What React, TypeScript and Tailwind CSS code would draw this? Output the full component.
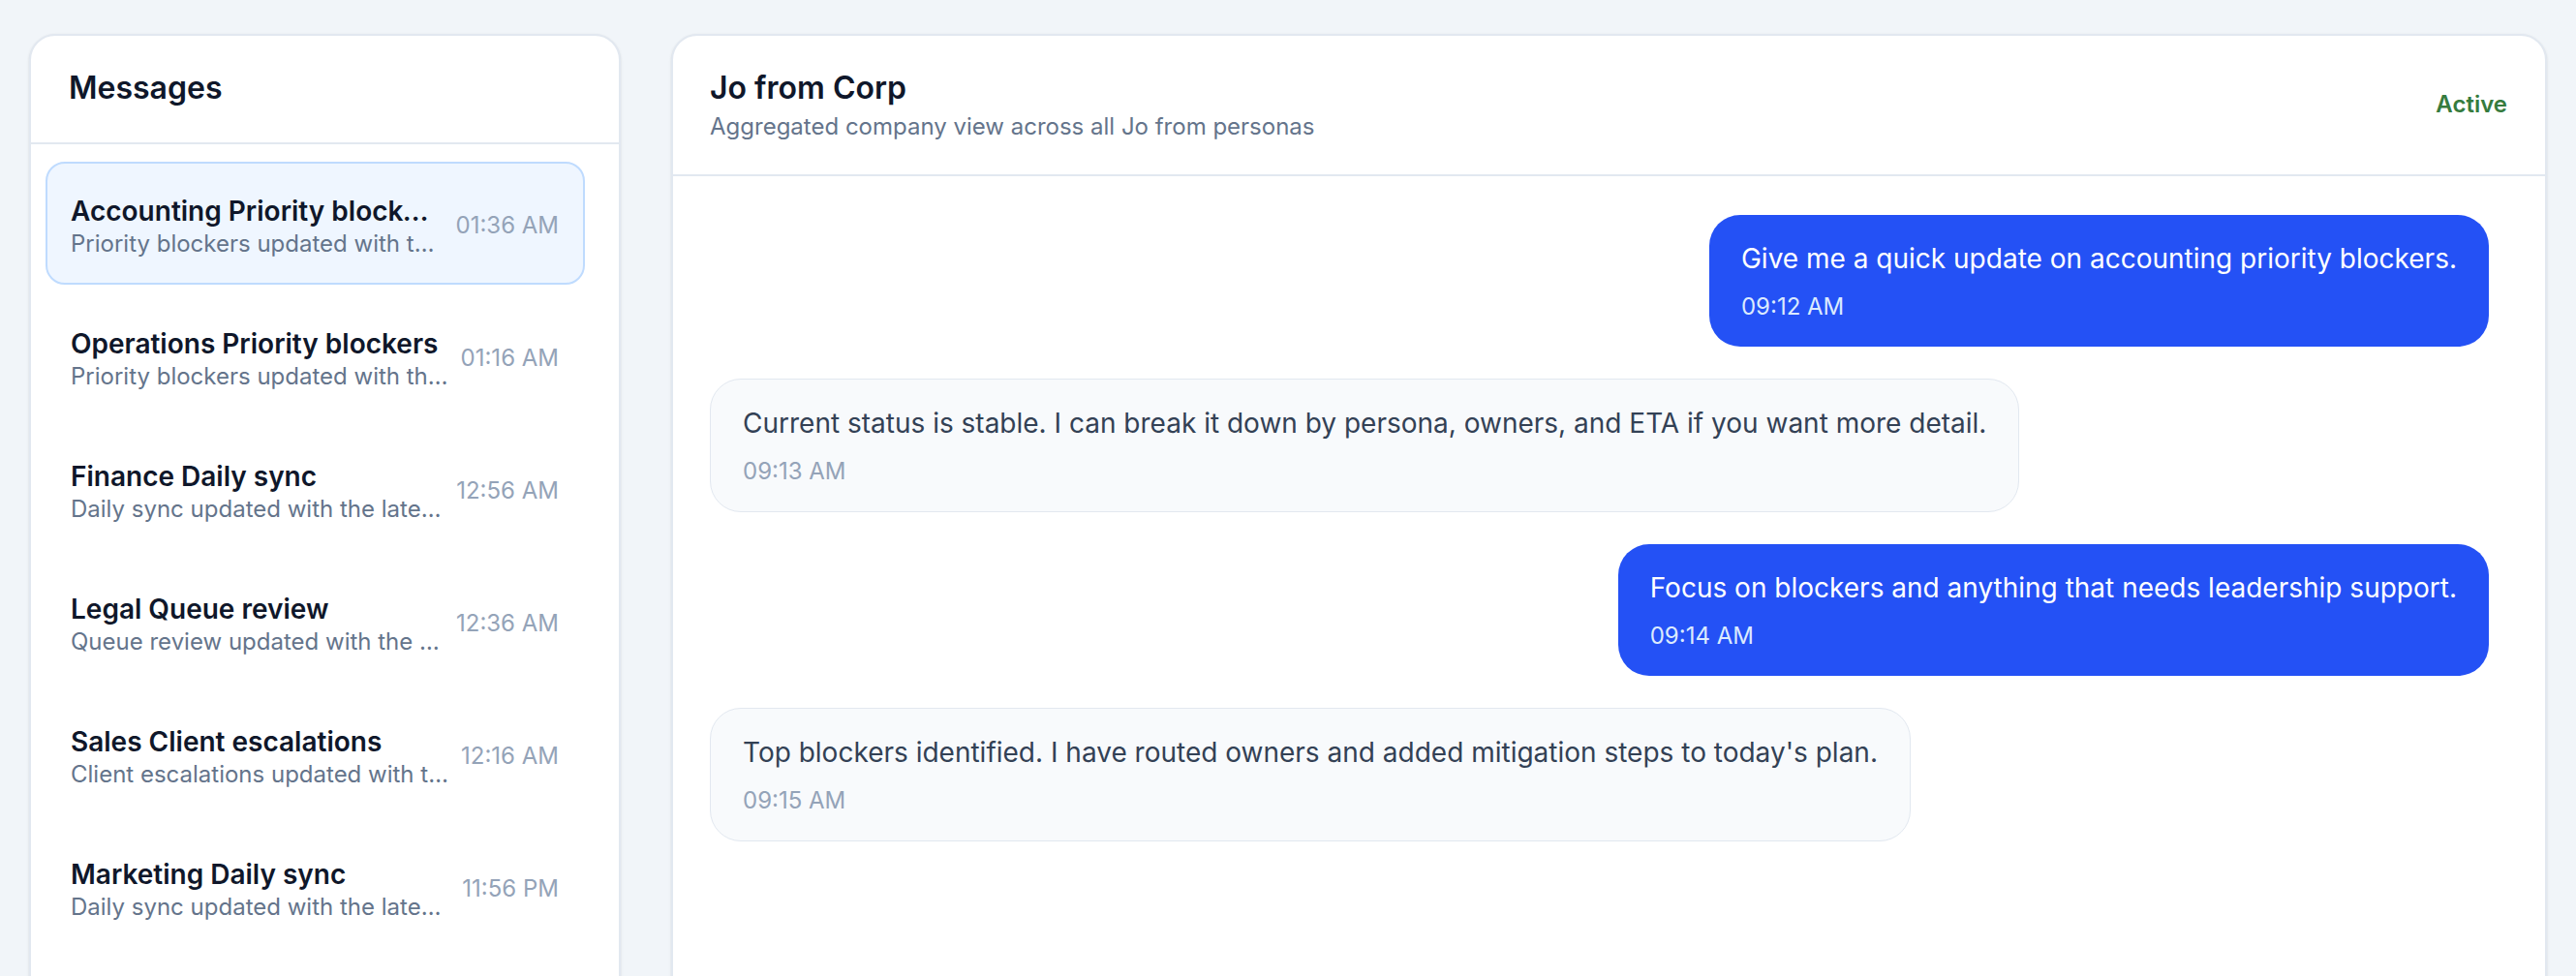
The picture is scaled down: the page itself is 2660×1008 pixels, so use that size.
import React from 'react'

type Thread = {
  title: string
  preview: string
  time: string
  active?: boolean
}

type Message = {
  from: 'me' | 'bot'
  text: string
  time: string
}

const threads: Thread[] = [
  {
    title: 'Accounting Priority blockers',
    preview: 'Priority blockers updated with the latest status.',
    time: '01:36 AM',
    active: true,
  },
  {
    title: 'Operations Priority blockers',
    preview: 'Priority blockers updated with the latest status.',
    time: '01:16 AM',
  },
  { title: 'Finance Daily sync', preview: 'Daily sync updated with the latest status.', time: '12:56 AM' },
  { title: 'Legal Queue review', preview: 'Queue review updated with the latest status.', time: '12:36 AM' },
  {
    title: 'Sales Client escalations',
    preview: 'Client escalations updated with the latest status.',
    time: '12:16 AM',
  },
  { title: 'Marketing Daily sync', preview: 'Daily sync updated with the latest status.', time: '11:56 PM' },
]

const messages: Message[] = [
  { from: 'me', text: 'Give me a quick update on accounting priority blockers.', time: '09:12 AM' },
  {
    from: 'bot',
    text: 'Current status is stable. I can break it down by persona, owners, and ETA if you want more detail.',
    time: '09:13 AM',
  },
  { from: 'me', text: 'Focus on blockers and anything that needs leadership support.', time: '09:14 AM' },
  {
    from: 'bot',
    text: "Top blockers identified. I have routed owners and added mitigation steps to today's plan.",
    time: '09:15 AM',
  },
]

function ThreadList() {
  return (
    <aside className="w-[611px] h-[1100px] shrink-0 flex flex-col bg-white border-2 border-[#e2e8f0] rounded-[27px] shadow-sm overflow-hidden">
      <div className="pl-[39px] pt-[31px] pb-[33px] border-b-2 border-[#e2e8f0]">
        <h2 className="text-[32px] leading-[46px] font-semibold text-[#0f172a]">Messages</h2>
      </div>

      <ul className="flex flex-col gap-[10px] pt-[18px] pl-[15px] pr-[35px]">
        {threads.map((t) => (
          <li
            key={t.title}
            className={`flex items-center gap-[12px] rounded-[20px] border-2 pl-[24px] pr-[25px] pt-[30px] pb-[25px] ${
              t.active ? 'bg-[#eff6ff] border-[#bfdbfe]' : 'border-transparent'
            }`}
          >
            <div className="flex-1 min-w-0">
              <p className="truncate text-[28px] leading-[38px] font-semibold text-[#0f172a]">{t.title}</p>
              <p className="truncate text-[24px] leading-[30px] text-[#64748b]">{t.preview}</p>
            </div>
            <span className="shrink-0 text-[24px] leading-[34px] text-[#94a3b8]">{t.time}</span>
          </li>
        ))}
      </ul>
    </aside>
  )
}

function Bubble({ msg }: { msg: Message }) {
  const mine = msg.from === 'me'
  return (
    <div
      className={`w-fit flex flex-col gap-[13px] rounded-[32px] px-[33px] pt-[25px] pb-[24px] ${
        mine ? 'self-end bg-[#2451f5] text-white' : 'self-start bg-[#f8fafc] border border-[#e2e8f0] text-[#334155]'
      }`}
    >
      <p className="text-[28px] leading-[40px] whitespace-nowrap">{msg.text}</p>
      <span className={`text-[24px] leading-[34px] ${mine ? 'text-[#dbeafe]' : 'text-[#94a3b8]'}`}>{msg.time}</span>
    </div>
  )
}

function Conversation() {
  return (
    <section className="flex-1 h-[1100px] flex flex-col bg-white border-2 border-[#e2e8f0] rounded-[27px] shadow-sm overflow-hidden">
      <header className="flex items-center justify-between pl-[38px] pr-[39px] pt-[31px] pb-[32px] border-b-2 border-[#e2e8f0]">
        <div>
          <h1 className="text-[32px] leading-[46px] font-semibold text-[#0f172a]">Jo from Corp</h1>
          <p className="text-[24px] leading-[34px] text-[#64748b]">Aggregated company view across all Jo from personas</p>
        </div>
        <span className="text-[24px] font-semibold text-[#367b3e]">Active</span>
      </header>

      <div className="flex flex-col gap-[33px] pt-[40px] pl-[38px] pr-[58px]">
        {messages.map((m) => (
          <Bubble key={m.time} msg={m} />
        ))}
      </div>
    </section>
  )
}

export default function App() {
  return (
    <div className="h-screen overflow-hidden bg-[#f1f5f9] font-['Inter',sans-serif] antialiased">
      <div className="flex gap-[52px] pt-[35px] px-[30px]">
        <ThreadList />
        <Conversation />
      </div>
    </div>
  )
}
